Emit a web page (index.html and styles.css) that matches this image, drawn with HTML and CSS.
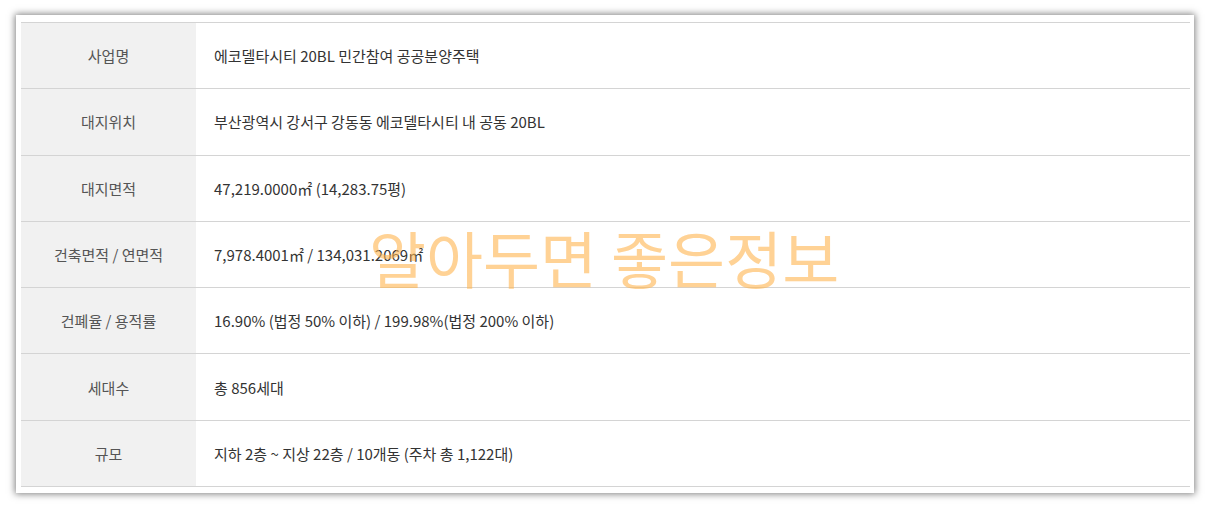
FILE: index.html
```
<html>
<head>
<title>에코델타시티 20BL 사업개요</title>
<link rel="stylesheet" href="styles.css">
</head>
<body>
<div class="frame">
  <table class="info">
    <tr><th>사업명</th><td>에코델타시티 20BL 민간참여 공공분양주택</td></tr>
    <tr><th>대지위치</th><td>부산광역시 강서구 강동동 에코델타시티 내 공동 20BL</td></tr>
    <tr><th>대지면적</th><td>47,219.0000㎡ (14,283.75평)</td></tr>
    <tr><th>건축면적 / 연면적</th><td>7,978.4001㎡ / 134,031.2069㎡</td></tr>
    <tr><th>건폐율 / 용적률</th><td>16.90% (법정 50% 이하) / 199.98%(법정 200% 이하)</td></tr>
    <tr><th>세대수</th><td>총 856세대</td></tr>
    <tr><th>규모</th><td>지하 2층 ~ 지상 22층 / 10개동 (주차 총 1,122대)</td></tr>
  </table>
  <div class="watermark">알아두면 좋은정보</div>
</div>
</body>
</html>
```

FILE: styles.css
```
body {
  margin: 0;
  padding: 15px 16px 17px 16px;
  background: white;
  font-family: "Noto Sans CJK KR", "Noto Sans", sans-serif;
}

/* White sheet with a dark photo-style shadow round it */
.frame {
  position: relative;
  width: 1178px;
  height: 478px;
  box-sizing: border-box;
  padding: 7px 4px 7px 5px;
  background: white;
  box-shadow: 0 0 7px 1px rgba(0, 0, 0, 0.5);
}

.info {
  width: 100%;
  border-collapse: collapse;
  border-top: 1px solid #d4d4d4;
  font-size: 15px;
}
.info tr {
  height: 66.3px;
  border-bottom: 1px solid #d4d4d4;
}
.info th {
  width: 175px;
  padding: 0;
  background: #f1f1f1;
  color: #555;
  font-weight: normal;
  text-align: center;
}
.info td {
  padding: 0 0 0 18px;
  color: #333;
}

/* Blog watermark lying over the table */
.watermark {
  position: absolute;
  left: 353px;
  top: 197px;
  font-size: 62px;
  color: #ffb54f;
  opacity: 0.6;
  white-space: nowrap;
  pointer-events: none;
}
```
